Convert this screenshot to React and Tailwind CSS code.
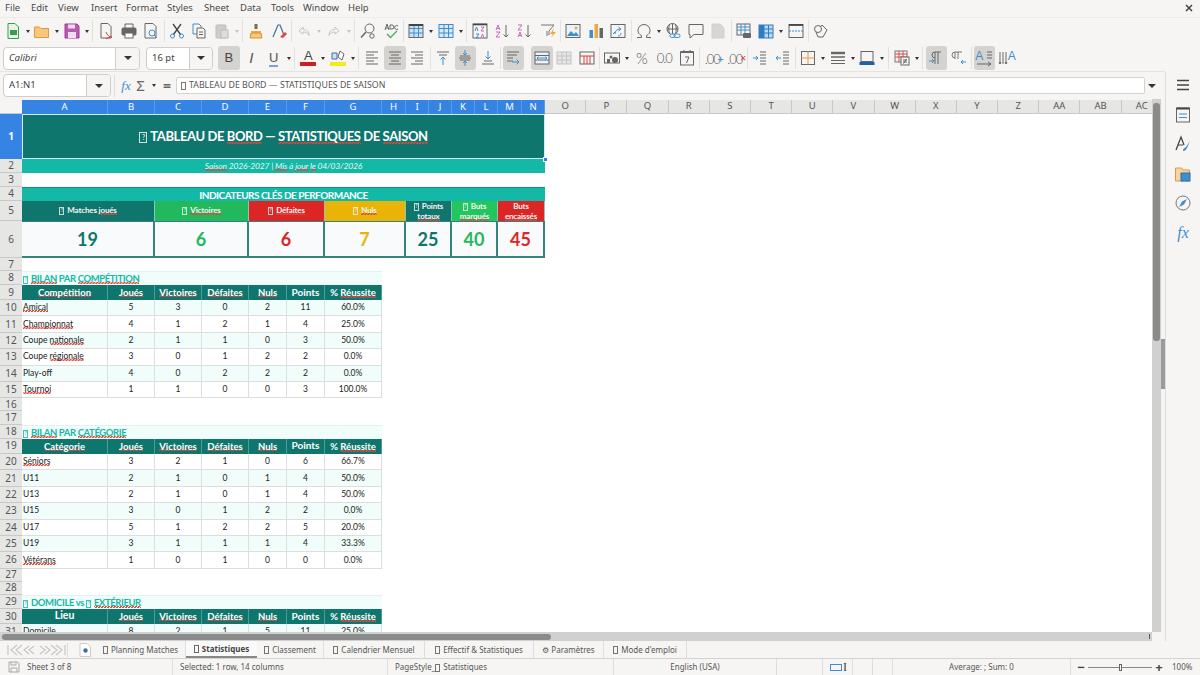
import React from "react";

const ui = "font-['Noto_Sans',sans-serif]";
const sheet = "font-['Lato',sans-serif]";
const colGrid = "grid shrink-0 grid-cols-[86px_47px_47px_47px_38px_38px_57px_24px_23px_23px_23px_23px_24px_23px]";

const menus = [
  ["File", "w-[26px]"], ["Edit", "w-[27px]"], ["View", "w-[33px]"], ["Insert", "w-[35px]"], ["Format", "w-[41px]"],
  ["Styles", "w-[37px]"], ["Sheet", "w-[36px]"], ["Data", "w-[31px]"], ["Tools", "w-[32px]"], ["Window", "w-[45px]"], ["Help", "w-[30px]"],
];

function Tofu({ q, className = "" }) {
  return (
    <span className={"inline-flex items-center justify-center border border-current align-middle mr-[3px] leading-none text-[5px] w-[5px] h-[8px] opacity-80 " + className}>
      {q ? "?" : ""}
    </span>
  );
}

// spell-check squiggle, drawn as a repeating background on the word
function W({ children }) {
  return <span className="bg-[linear-gradient(135deg,transparent_30%,#e0483c_30%,#e0483c_70%,transparent_70%)] bg-[length:3px_2px] bg-repeat-x bg-bottom">{children}</span>;
}

function Ico({ children }) {
  return (
    <svg viewBox="0 0 18 18" width="18" height="18" fill="none" strokeWidth="1" stroke="#666">
      {children}
    </svg>
  );
}

function Tool({ on, children }) {
  return (
    <div className={"w-[21.500px] h-[24px] shrink-0 flex items-center justify-center rounded-[3px] " + (on ? "bg-[#d5d3d0]" : "")}>
      {children}
    </div>
  );
}

function Drop({ light }) {
  return (
    <div className="w-[6px] shrink-0 flex items-center justify-center">
      <div className={"border-x-[2.500px] border-t-[3px] border-x-transparent " + (light ? "border-t-[#c4c4c4]" : "border-t-[#333]")} />
    </div>
  );
}

function Sep({ wide }) {
  return (
    <div className={"shrink-0 flex justify-center " + (wide ? "w-[4px]" : "w-[2px]")}>
      <div className="w-px h-[22px] bg-[#e2e1df]" />
    </div>
  );
}

function Lines({ rows, stroke = "#666" }) {
  return rows.map(([x1, x2], i) => <path key={i} d={`M${x1} ${3 + i * 3}H${x2}`} stroke={stroke} />);
}

const row1 = [
  <Ico><path d="M4 1.500h7l3.500 3.500v11.500H4z" stroke="#3a9b4a" fill="#e6f4e8" /><rect x="6" y="8" width="7" height="5" fill="#3a9b4a" stroke="none" /></Ico>, "d",
  <Ico><path d="M1.500 5h5l1.500 1.500h7.500v9h-14z" fill="#f6c77c" stroke="#e09a3a" /></Ico>, "d",
  <Ico><path d="M2 2h12l2 2v12H2z" fill="#b85bb0" stroke="#9b3f94" /><rect x="5" y="2.500" width="7" height="4" fill="#f3dcf1" stroke="none" /><rect x="5" y="10" width="8" height="6" fill="#f3dcf1" stroke="none" /></Ico>, "d", "s",
  <Ico><path d="M4 1.500h7l3 3v11.500H4z" /><path d="M9 10c1 3 3 5 6 5-2 0-5 1-6 2" stroke="#d9403a" /></Ico>,
  <Ico><path d="M5 6V2h8v4" /><rect x="2" y="6" width="14" height="7" rx="1" fill="#666" /><rect x="5" y="11" width="8" height="5" fill="#fff" /></Ico>,
  <Ico><path d="M3 1.500h8l3 3v11.500H3z" /><circle cx="10" cy="11" r="3" stroke="#3d8fcf" /><path d="M12 13l3 3" stroke="#3d8fcf" /></Ico>, "s",
  <Ico><circle cx="4.500" cy="14" r="2" stroke="#3d8fcf" /><circle cx="13.500" cy="14" r="2" stroke="#3d8fcf" /><path d="M5.500 12.500L13 2M12.500 12.500L5 2" stroke="#444" strokeWidth="1.300" /></Ico>,
  <Ico><path d="M3 2h6l2 2v8H3z" stroke="#3d8fcf" /><path d="M7 6h6l2 2v8H7z" fill="#f6f5f4" /><path d="M9 10h4M9 12.500h4" /></Ico>,
  <Ico><rect x="3" y="3" width="10" height="13" rx="1" fill="#ccc" stroke="#bbb" /><rect x="8" y="8" width="7" height="8" fill="#ddd" stroke="#bbb" /></Ico>, "dl", "s",
  <Ico><path d="M7.500 2h3v5h-3z" fill="#7a6a58" stroke="none" /><path d="M4 9h10v2H4z" fill="#f0a93c" stroke="none" /><path d="M4 11h10l1 5H3z" fill="#f6c77c" stroke="#d99432" /></Ico>,
  <Ico><path d="M3 15L8 3h2l4 10" stroke="#3d6d9c" strokeWidth="1.200" /><path d="M10 15l5-5 2 2-4 4z" fill="#e04848" stroke="none" /></Ico>, "s",
  <Ico><path d="M4 9l4-4v2.500c4 0 6 2 6 6-1.500-3-3-3.500-6-3.500V12z" stroke="#c4c4c4" /></Ico>, "dl",
  <Ico><path d="M14 9l-4-4v2.500c-4 0-6 2-6 6 1.500-3 3-3.500 6-3.500V12z" stroke="#c4c4c4" /></Ico>, "dl", "s",
  <Ico><circle cx="10.500" cy="6.500" r="4.500" /><path d="M7 10l-5 5.500" strokeWidth="1.500" /><circle cx="13" cy="14" r="2.200" /></Ico>,
  <Ico><path d="M3 8l2-6 2 6M4 6h2M8 3h2a1.200 1.200 0 010 4H8zM16 4a2 2 0 100 3" stroke="#666" /><path d="M5 12l3.500 3.500L15 9" stroke="#4cb05c" strokeWidth="1.400" /></Ico>, "s",
  <Ico><rect x="2" y="2.500" width="14" height="13" fill="#cfe2f3" stroke="#666" /><path d="M2 6.500h14M2 11h14M7 2.500v13M11.500 2.500v13" stroke="#3d8fcf" /><path d="M2 3h14" stroke="#444" strokeWidth="2" /></Ico>, "d",
  <Ico><rect x="2" y="2.500" width="14" height="13" fill="#dbe9f5" stroke="#3d8fcf" /><path d="M2 6.500h14M2 11h14M7 2.500v13M11.500 2.500v13" stroke="#3d8fcf" /></Ico>, "d", "s",
  <Ico><rect x="2" y="2" width="14" height="14" stroke="#666" /><path d="M2 2.500h14" strokeWidth="1.600" stroke="#444" /><path d="M4 9l1.500-4L7 9M5 12h3l-3 4h3" stroke="#3d8fcf" /><path d="M10 5h3l-3 4h3M10 16l1.500-4 1.500 4" stroke="#c46ac0" /></Ico>,
  <Ico><path d="M2 8l2-5 2 5M3 6.500h2M2 10h4l-4 5h4" stroke="#c46ac0" /><path d="M12 3v12M9.500 12.500L12 15l2.500-2.500" /></Ico>,
  <Ico><path d="M2 3h4L2 8h4M2 15l2-5 2 5M3 13.500h2" stroke="#c46ac0" /><path d="M12 3v12M9.500 12.500L12 15l2.500-2.500" /></Ico>,
  <Ico><path d="M2 3h13L10 9v4" stroke="#777" /><path d="M8 9v5" stroke="#777" /><path d="M15 6l-4 6h3l-2 4 5-6h-3z" fill="#f0a93c" stroke="none" /></Ico>, "s",
  <Ico><rect x="2" y="2.500" width="14" height="13" stroke="#666" fill="#eaf3fb" /><path d="M3 14l4-5 3 3 2-2 3 4z" fill="#3d8fcf" stroke="none" /><circle cx="12" cy="6" r="1.500" fill="#f0a93c" stroke="none" /></Ico>,
  <Ico><rect x="2.500" y="8" width="3.500" height="8" fill="#3d8fcf" stroke="none" /><rect x="7.500" y="2" width="3.500" height="14" fill="#f0a93c" stroke="none" /><rect x="12.500" y="6" width="3.500" height="10" fill="#666" stroke="none" /></Ico>,
  <Ico><rect x="2" y="2.500" width="14" height="13" /><path d="M6 12c0-3 2-5 5-5M9.500 5L12 7 9.500 9M6 10l-2 2M12 11c0 2-1 3-3 3" stroke="#3d8fcf" /></Ico>, "s",
  <Ico><path d="M2 15.500h4.500v-2C4 12.500 3 10.500 3 8.500a6 6 0 0112 0c0 2-1 4-3.500 5v2H16" /></Ico>, "d",
  <Ico><circle cx="8.500" cy="7" r="5.500" /><path d="M3 7h11M8.500 1.500v11M5.500 2.500c-1 3-1 6 0 9M11.500 2.500c1 3 1 6 0 9" /><rect x="6" y="12" width="5" height="3.500" rx="1.700" stroke="#3d8fcf" fill="#f6f5f4" /><rect x="10" y="12" width="6" height="3.500" rx="1.700" stroke="#3d8fcf" /></Ico>,
  <Ico><path d="M2 2.500h14v10H7l-4 3.500v-3.500H2z" /></Ico>,
  <Ico><path d="M3 2h8l4 4v10H3z" fill="#d6d6d6" stroke="#d0d0d0" /></Ico>, "s",
  <Ico><rect x="2" y="2" width="13" height="11" /><path d="M2 5h13M2 8h13M6 2v11M10 2v11" stroke="#3d8fcf" /><rect x="8" y="11" width="8" height="5" rx="1" fill="#666" stroke="none" /></Ico>,
  <Ico><rect x="2" y="3" width="14" height="13" fill="#bcd8ef" stroke="#2f7cbf" /><path d="M2 7h14M2 11h14M7 3v13M11.500 3v13" stroke="#2f7cbf" /><path d="M2 3h5v13H2z" fill="#2f7cbf" stroke="none" /></Ico>, "d",
  <Ico><rect x="2" y="2.500" width="14" height="13" /><path d="M2 3h14" strokeWidth="1.800" stroke="#444" /><path d="M2 9h14" stroke="#3d8fcf" strokeDasharray="2 1" /></Ico>, "s",
  <Ico><path d="M4 10l6-7 5 5-4 7H6z" /><circle cx="6" cy="7" r="3.500" fill="#f6f5f4" /></Ico>,
];

const al = (rows) => <Ico><Lines rows={rows} /></Ico>;

const row2a = [
  <span className="font-['Liberation_Sans',sans-serif] italic text-[#555] text-[15px]">I</span>,
  <span className="font-['Liberation_Sans',sans-serif] text-[#555] text-[13px] leading-[15px] border-b-2 border-[#7aa6d6]">U</span>,
  "d", "s",
  <div className="flex flex-col items-center"><span className="font-['Liberation_Sans',sans-serif] text-[#444] text-[13px] leading-[12px]">A</span><div className="w-[16px] h-[4px] bg-[#c9211e]" /></div>, "d",
  <div className="flex flex-col items-center"><svg viewBox="0 0 16 12" width="16" height="12"><path d="M2 3h5v6H2z" stroke="#3d6d9c" fill="#cfe2f3" /><path d="M8 7l2-6 4 3-2 6z" fill="#fff" stroke="#666" /></svg><div className="w-[16px] h-[4px] bg-[#f5ea20]" /></div>, "d", "s",
  al([[3, 15], [3, 11], [3, 15], [3, 11], [3, 15]]),
  "on:", al([[3, 15], [5, 13], [3, 15], [5, 13], [3, 15]]),
  al([[3, 15], [7, 15], [3, 15], [7, 15], [3, 15]]), "s",
  <Ico><path d="M3 3h12M5 6h8" /><path d="M9 16V8M6.500 10.500L9 8l2.500 2.500" stroke="#3d8fcf" /></Ico>,
  "on:", <Ico><path d="M3 9h12" /><path d="M4 7h10M4 11h10" /><path d="M9 1v5M7 4L9 6l2-2M9 17v-5M7 14l2-2 2 2" stroke="#3d8fcf" /></Ico>,
  <Ico><path d="M3 15h12M5 12h8" /><path d="M9 2v8M6.500 7.500L9 10l2.500-2.500" stroke="#3d8fcf" /></Ico>, "s",
  "on:", <Ico><path d="M3 3h12M3 6h10M3 9h6M3 12h6" /><path d="M8 13h7M12.500 10.500L15 13l-2.500 2.500" stroke="#3d8fcf" /></Ico>,
];

const row2b = [
  "on:", <Ico><rect x="2" y="3" width="14" height="12" fill="#eaf3fb" /><path d="M2 6.500h14M2 11h14" /><path d="M4 9h10M5.500 7.500L4 9l1.500 1.500M12.500 7.500L14 9l-1.500 1.500" stroke="#3d8fcf" /></Ico>,
  <Ico><rect x="2" y="3" width="14" height="12" stroke="#c4c4c4" fill="#e6e6e6" /><path d="M2 7h14M2 11h14M7 3v12M11.500 3v12" stroke="#c4c4c4" /></Ico>,
  <Ico><rect x="2" y="3" width="14" height="12" stroke="#666" /><path d="M2 7h14" stroke="#d9403a" /><path d="M6 7v8M9 7v8M12 7v8" stroke="#d9403a" /></Ico>, "s",
  <Ico><rect x="1.500" y="4" width="15" height="10" /><rect x="4" y="10" width="3" height="4" fill="#666" stroke="none" /><circle cx="12" cy="11" r="3" fill="#666" stroke="none" /><circle cx="8" cy="8" r="1.500" fill="#666" stroke="none" /></Ico>, "d",
  <span className={sheet + " text-[15px] font-light leading-none text-[#555]"}>%</span>,
  <span className={sheet + " text-[13px] font-light tracking-[-1px] leading-none text-[#555]"}>0.0</span>,
  <Ico><rect x="2.500" y="3" width="13" height="13" /><path d="M2.500 3h13" strokeWidth="2" /><path d="M6 1v3M12 1v3M7 8h4l-2.500 6" /></Ico>, "s",
  <div className="relative"><span className={sheet + " text-[13px] font-light tracking-[-1px] leading-none text-[#555]"}>.00</span><span className="absolute -right-[4px] top-[7px] text-[11px] leading-none text-[#3d8fcf]">+</span></div>,
  <div className="relative"><span className={sheet + " text-[13px] font-light tracking-[-1px] leading-none text-[#555]"}>.00</span><span className="absolute -right-[4px] top-[6px] text-[11px] leading-none text-[#d9403a]">×</span></div>, "s",
  <Ico><path d="M9 3h6M9 6h6M9 9h6M9 12h6M9 15h6" /><path d="M2 9h5M5 7l2 2-2 2" stroke="#3d8fcf" /></Ico>,
  <Ico><path d="M9 3h6M9 6h6M9 9h6M9 12h6M9 15h6" /><path d="M2 9h5M4 7L2 9l2 2" stroke="#3d8fcf" /></Ico>, "s",
  <Ico><rect x="2.500" y="2.500" width="13" height="13" /><path d="M9 2.500v13M2.500 9h13" stroke="#e09a3a" /></Ico>, "d",
  <Ico><path d="M2 4h14" strokeWidth="2.400" /><path d="M2 8h14" strokeWidth="1.500" /><path d="M2 11.500h14M2 14.500h14" /></Ico>, "d",
  <Ico><rect x="3" y="2.500" width="12" height="10" /><rect x="1.500" y="13" width="15" height="3" fill="#1f5fa3" stroke="none" /></Ico>, "d", "s",
  <Ico><rect x="2" y="2" width="12" height="11" stroke="#777" /><path d="M2 5h12M2 8h12M6 2v11M10 2v11" stroke="#e04848" /><rect x="8" y="8" width="8" height="8" fill="#f6f5f4" /><path d="M10 11h4M10 13h4M13.500 10l-3 4.500" /></Ico>, "d", "s",
  "on:", <Ico><path d="M8 15V3h6M11 15V3M8 3a3 3 0 000 6" /><path d="M2 12h5M5 10l2 2-2 2" stroke="#3d8fcf" /></Ico>,
  <Ico><path d="M5 10V3h7M8 10V3M5 3a3 3 0 000 6" stroke="#777" /><path d="M11 13h5M13 11l-2 2 2 2" stroke="#3d8fcf" /></Ico>, "s",
  "on:", <div className="relative w-[18px] h-[18px]"><span className="absolute left-0 top-[1px] font-['Liberation_Sans',sans-serif] text-[12px] leading-none text-[#3d8fcf]">A</span><svg viewBox="0 0 18 18" width="18" height="18" className="absolute inset-0"><path d="M2 15h14M13 13l3 2-3 2M12 3h5M12 6h5M12 9h5" stroke="#666" fill="none" /></svg></div>,
  <div className="relative w-[18px] h-[18px]"><span className="absolute right-0 top-[1px] font-['Liberation_Sans',sans-serif] text-[12px] leading-none text-[#3d8fcf]">A</span><svg viewBox="0 0 18 18" width="18" height="18" className="absolute inset-0"><path d="M2 3v12M5 3v12M8 3v12M1 13l1 2 1-2M7 13l1 2 1-2" stroke="#666" fill="none" /></svg></div>,
];

function ToolRow({ items }) {
  const out = [];
  let on = false;
  items.forEach((it, i) => {
    const prev = items[i - 1];
    if (it === "on:") on = true;
    else if (it === "d") out.push(<Drop key={i} />);
    else if (it === "dl") out.push(<Drop key={i} light />);
    else if (it === "s") out.push(<Sep key={i} wide={prev === "d" || prev === "dl"} />);
    else {
      out.push(<Tool key={i} on={on}>{it}</Tool>);
      on = false;
    }
  });
  return out;
}

function Combo({ box, split, italic, children }) {
  return (
    <div className={"h-[23px] flex border border-[#cfcdca] rounded-[4px] bg-white shrink-0 overflow-hidden " + box}>
      <div className={"flex-1 flex items-center pl-[5px] text-[9.500px] text-[#444] " + (italic ? "italic" : "")}>{children}</div>
      <div className={"flex items-center justify-center bg-[#f6f5f4] border-l border-[#cfcdca] " + split}>
        <div className="border-x-[4px] border-t-[4px] border-x-transparent border-t-[#333]" />
      </div>
    </div>
  );
}

function Toolbars() {
  return (
    <>
      <div className="h-[17px] flex items-center pl-[5px] text-[9.500px] text-[#4a4a4a] relative">
        {menus.map(([m, w]) => <div key={m} className={w}>{m}</div>)}
        <svg viewBox="0 0 8 8" width="8" height="8" className="absolute right-[7px] top-[4px]"><path d="M1 1l6 6M7 1L1 7" stroke="#444" strokeWidth="1.500" /></svg>
      </div>
      <div className="h-[27px] flex items-center gap-px pl-[2px] border-t border-[#ecebe9]">
        <ToolRow items={row1} />
      </div>
      <div className="h-[28px] flex items-center pl-[3px]">
        <Combo box="w-[137px]" split="w-[24px]" italic>Calibri</Combo>
        <div className="w-[6px]" />
        <Combo box="w-[67px]" split="w-[23px]">16 pt</Combo>
        <div className="w-[5px]" />
        <Tool on><span className="font-['Liberation_Sans',sans-serif] text-[13px] text-[#444]">B</span></Tool>
        <div className="flex items-center gap-px ml-px">
          <ToolRow items={row2a} />
          <div className="w-[5px]" />
          <ToolRow items={row2b} />
        </div>
      </div>
    </>
  );
}

function FormulaBar() {
  return (
    <div className="h-[28px] flex items-center pl-[3px] pr-[6px] border-t border-[#e4e3e1] mt-[-1px]">
      <Combo box="w-[108px]" split="w-[24px]">A1:N1</Combo>
      <div className="w-[7px] flex justify-center"><div className="w-px h-[22px] bg-[#dedddb]" /></div>
      <span className="w-[14px] ml-[1px] font-['Liberation_Serif',serif] italic text-[13px] text-[#3d8fcf] text-center">fx</span>
      <span className="w-[15px] text-[15px] text-[#666] text-center">Σ</span>
      <div className="w-[12px] flex justify-center"><div className="border-x-[2.500px] border-t-[3px] border-x-transparent border-t-[#333]" /></div>
      <span className="w-[14px] text-[14px] font-bold text-[#666] text-center">=</span>
      <div className="w-[2px]" />
      <div className="flex-1 h-[17px] bg-white border border-[#d5d3d0] rounded-[2px] flex items-center pl-[4px] text-[8.800px] text-[#555]">
        <span><Tofu />TABLEAU DE BORD — STATISTIQUES DE SAISON</span>
      </div>
      <div className="w-[14px] flex justify-center"><div className="border-x-[4px] border-t-[4px] border-x-transparent border-t-[#333]" /></div>
    </div>
  );
}

function ColHeaders() {
  const blue = ["A", "B", "C", "D", "E", "F", "G", "H", "I", "J", "K", "L", "M", "N"];
  const rest = ["O", "P", "Q", "R", "S", "T", "U", "V", "W", "X", "Y", "Z", "AA", "AB", "AC"];
  return (
    <div className="h-[14px] flex text-[9.500px] shrink-0 mt-px overflow-hidden">
      <div className="w-[22px] shrink-0 bg-[#f6f5f4] border-b border-[#c8c8c8]" />
      <div className={colGrid + " bg-[#3584e4] text-white"}>
        {blue.map((c) => <div key={c} className="flex items-center justify-center border-r border-[#5a9ae8]">{c}</div>)}
      </div>
      {rest.map((c) => (
        <div key={c} className="w-[41.200px] shrink-0 flex items-center justify-center bg-[#e6e6e5] text-[#555] border-r border-b border-[#c8c8c8]">{c}</div>
      ))}
    </div>
  );
}

function Row({ n, h, sel, children }) {
  return (
    <div className={"flex shrink-0 " + h}>
      <div className={"w-[22px] shrink-0 flex items-center justify-center text-[10px] border-b " + (sel ? "bg-[#3584e4] text-white font-bold border-[#3584e4]" : "bg-[#e6e6e5] text-[#555] border-[#c8c8c8]")}>{n}</div>
      <div className={colGrid + " " + sheet}>{children}</div>
    </div>
  );
}

function TableHead({ first, firstBig }) {
  const cells = [<W>Joués</W>, <W>Victoires</W>, <W>Défaites</W>, <W>Nuls</W>, "Points", <span>% <W>Réussite</W></span>];
  const hc = "bg-[#0f766e] text-white font-bold flex items-center justify-center border-r border-[#4d9c95] leading-none";
  return (
    <>
      <div className={hc + (firstBig ? " text-[10.500px] pb-[2px]" : " text-[9.500px]")}>{first}</div>
      {cells.map((c, i) => <div key={i} className={hc + (i === 4 ? " text-[10px] pb-[2px]" : " text-[9.500px]")}>{c}</div>)}
    </>
  );
}

function DataRow({ n, h, cells, odd }) {
  const bg = odd ? "bg-[#f0fdfa]" : "bg-white";
  const c = "flex items-center border-r border-b border-[#dcdfde] text-[#222] text-[8.500px] " + bg;
  return (
    <Row n={n} h={h}>
      <div className={c + " pl-px"}><span>{cells[0]}</span></div>
      {cells.slice(1).map((v, i) => <div key={i} className={c + " justify-center"}>{v}</div>)}
    </Row>
  );
}

function Section({ n, children }) {
  return (
    <Row n={n} h="h-[14px]">
      <div className="col-span-7 bg-[#f0fdfa] text-[#14b8a6] font-bold text-[9.500px] tracking-[-0.400px] flex items-center pl-px pb-px border-t border-[#dff3ef]">
        <span className="whitespace-nowrap">{children}</span>
      </div>
    </Row>
  );
}

const compet = [
  [<W>Amical</W>, 5, 3, 0, 2, 11, "60.0%"],
  [<W>Championnat</W>, 4, 1, 2, 1, 4, "25.0%"],
  [<>Coupe <W>nationale</W></>, 2, 1, 1, 0, 3, "50.0%"],
  [<>Coupe <W>régionale</W></>, 3, 0, 1, 2, 2, "0.0%"],
  ["Play-off", 4, 0, 2, 2, 2, "0.0%"],
  [<W>Tournoi</W>, 1, 1, 0, 0, 3, "100.0%"],
];

const categ = [
  [<W>Séniors</W>, 3, 2, 1, 0, 6, "66.7%"],
  ["U11", 2, 1, 0, 1, 4, "50.0%"],
  ["U13", 2, 1, 0, 1, 4, "50.0%"],
  ["U15", 3, 0, 1, 2, 2, "0.0%"],
  ["U17", 5, 1, 2, 2, 5, "20.0%"],
  ["U19", 3, 1, 1, 1, 4, "33.3%"],
  [<W>Vétérans</W>, 1, 0, 1, 0, 0, "0.0%"],
];

function Kpi({ span, bg, big, children }) {
  return (
    <div className={span + " " + bg + " text-[#f4f4f4] font-bold flex items-center justify-center text-center border-r border-[#8fc4be] text-[8px] tracking-[-0.150px] " + (big ? "leading-[10px]" : "pb-[2px]")}>
      <div>{children}</div>
    </div>
  );
}

function KVal({ span, color, children }) {
  return (
    <div className={span + " bg-[#f8fafc] border-r-2 border-b-2 border-t border-[#35837c] flex items-center justify-center font-bold text-[18px] " + color}>{children}</div>
  );
}

function Sheet() {
  return (
    <div className="flex-1 min-h-0 overflow-hidden bg-white relative">
      <Row n="1" h="h-[45px]" sel>
        <div className="col-span-14 bg-[#0f766e] border border-[#d5e8f7] text-white font-bold text-[13px] tracking-[-0.400px] flex items-center justify-center">
          <span><Tofu q className="w-[8px] h-[11px] text-[7px]" />TABLEAU DE <W>BORD</W> — <W>STATISTIQUES</W> DE <W>SAISON</W></span>
        </div>
      </Row>
      <Row n="2" h="h-[14px]">
        <div className="col-span-14 bg-[#14b8a6] text-[#e6f7f4] italic text-[8.500px] tracking-[-0.150px] flex items-center justify-center">
          <span><W>Saison</W> 2026-2027 | <W>Mis</W> à <W>jour</W> <W>le</W> 04/03/2026</span>
        </div>
      </Row>
      <Row n="3" h="h-[14px]" />
      <Row n="4" h="h-[14px]">
        <div className="col-span-14 bg-[#14b8a6] text-white font-bold text-[10px] tracking-[-0.500px] flex items-center justify-center border-t border-[#0f8f82] pb-[3px]">INDICATEURS CLÉS DE PERFORMANCE</div>
      </Row>
      <Row n="5" h="h-[20px]">
        <Kpi span="col-span-2" bg="bg-[#0f766e]"><Tofu q />Matches <W>joués</W></Kpi>
        <Kpi span="col-span-2" bg="bg-[#22b85c]"><Tofu q /><W>Victoires</W></Kpi>
        <Kpi span="col-span-2" bg="bg-[#dc2626]"><Tofu q /><W>Défaites</W></Kpi>
        <Kpi span="col-span-2" bg="bg-[#eab308]"><Tofu q /><W>Nuls</W></Kpi>
        <Kpi span="col-span-2" bg="bg-[#0f766e]" big><Tofu q />Points<br /><W>totaux</W></Kpi>
        <Kpi span="col-span-2" bg="bg-[#22c55e]" big><Tofu q />Buts<br /><W>marqués</W></Kpi>
        <Kpi span="col-span-2" bg="bg-[#dc2626]" big>Buts<br /><W>encaissés</W></Kpi>
      </Row>
      <Row n="6" h="h-[37px]">
        <KVal span="col-span-2" color="text-[#0f766e]">19</KVal>
        <KVal span="col-span-2" color="text-[#22b85c]">6</KVal>
        <KVal span="col-span-2" color="text-[#dc2626]">6</KVal>
        <KVal span="col-span-2" color="text-[#eab308]">7</KVal>
        <KVal span="col-span-2" color="text-[#0f766e]">25</KVal>
        <KVal span="col-span-2" color="text-[#22b85c]">40</KVal>
        <KVal span="col-span-2" color="text-[#dc2626]">45</KVal>
      </Row>
      <Row n="7" h="h-[13px]" />
      <Section n="8"><Tofu q /><W>BILAN</W> PAR <W>COMPÉTITION</W></Section>
      <Row n="9" h="h-[15px]"><TableHead first={<W>Compétition</W>} /></Row>
      {compet.map((c, i) => <DataRow key={i} n={10 + i} h="h-[16.400px]" cells={c} odd={i % 2 === 0} />)}
      <Row n="16" h="h-[13px]" />
      <Row n="17" h="h-[13.600px]" />
      <Section n="18"><Tofu q /><W>BILAN</W> PAR <W>CATÉGORIE</W></Section>
      <Row n="19" h="h-[15px]"><TableHead first={<W>Catégorie</W>} /></Row>
      {categ.map((c, i) => <DataRow key={i} n={20 + i} h="h-[16.400px]" cells={c} odd={i % 2 === 1} />)}
      <Row n="27" h="h-[13px]" />
      <Row n="28" h="h-[13.400px]" />
      <Section n="29"><Tofu q />DOMICILE vs <Tofu q /><W>EXTÉRIEUR</W></Section>
      <Row n="30" h="h-[15px]"><TableHead first="Lieu" firstBig /></Row>
      <DataRow n="31" h="h-[16px]" cells={["Domicile", 8, 2, 1, 5, 11, "25.0%"]} odd />
      <div className="absolute left-[543px] top-[43px] w-[5px] h-[5px] bg-[#3584e4] border border-white" />
    </div>
  );
}

function Sidebar() {
  return (
    <div className="w-[35px] shrink-0 border-l border-[#dedddb] flex flex-col items-center pt-[4px] gap-[11.500px]">
      <svg viewBox="0 0 18 18" width="18" height="18"><path d="M3 4.500h12M3 9h12M3 13.500h12" stroke="#444" strokeWidth="1.500" /></svg>
      <Ico><rect x="2.500" y="2" width="13" height="14" /><path d="M2.500 2.500h13" strokeWidth="2" stroke="#444" /><path d="M5 8h8M5 11.500h8" stroke="#3d8fcf" /></Ico>
      <Ico><path d="M2 15L7 2l3 8" stroke="#444" strokeWidth="1.300" /><path d="M4 10h5" stroke="#444" /><path d="M9 16c0-3 2-3 3-4l4-6-3 7c-1 2-2 3-4 3z" fill="#3d8fcf" stroke="none" /></Ico>
      <Ico><path d="M1.500 3h6l1.500 2h6.500v11h-14z" fill="#f6d4a4" stroke="#e09a3a" /><rect x="7" y="8" width="9" height="8" fill="#3d8fcf" stroke="#2f6fa8" /></Ico>
      <Ico><circle cx="9" cy="9" r="7" stroke="#777" /><path d="M13 5l-3 5.500L5 13l3-5.500z" fill="#3d8fcf" stroke="none" /></Ico>
      <span className="font-['Liberation_Serif',serif] italic text-[16px] leading-[18px] text-[#3d8fcf]">fx</span>
    </div>
  );
}

function TabBar() {
  const tabs = [
    ["Planning Matches", "w-[90px]"], ["Classement", "w-[67px]"], ["Calendrier Mensuel", "w-[101px]"],
    ["Effectif & Statistiques", "w-[109px]"], ["Paramètres", "w-[70px]"], ["Mode d'emploi", "w-[83px]"],
  ];
  const Tab = ([t, w], gear) => (
    <div key={t} className={"h-[17px] flex items-center justify-center border-r border-[#dedddb] shrink-0 text-[8px] text-[#555] whitespace-nowrap " + w}>
      <span>{gear ? <span className="mr-[2px]">⚙</span> : <Tofu />}{t}</span>
    </div>
  );
  return (
    <div className="h-[17px] flex items-center pl-[7px] shrink-0 bg-[#f6f5f4]">
      <svg viewBox="0 0 60 12" width="60" height="12" fill="none" stroke="#c6c6c6" strokeWidth="1.200" className="shrink-0">
        <path d="M1 1v10M10 1L4 6l6 5M15 1l-6 5 6 5M22 2l-5 4 5 4M27 2l-5 4 5 4M33 2l5 4-5 4M38 2l5 4-5 4M44 1l6 5-6 5M49 1l6 5-6 5M58 1v10" />
      </svg>
      <div className="w-px h-[14px] bg-[#dedddb] mr-[11px] shrink-0" />
      <svg viewBox="0 0 12 14" width="12" height="14" className="shrink-0"><path d="M1 .5h7l3.500 3.500v9.500H1z" fill="#fff" stroke="#ccc" /><circle cx="6.500" cy="7.500" r="2.200" fill="#3d6db5" /></svg>
      <div className="w-[5px] shrink-0" />
      {Tab(tabs[0])}
      <div className="h-[17px] w-[71px] shrink-0 bg-[#fafafa] border-b-2 border-[#888] flex items-center justify-center text-[8px] font-bold text-[#444]"><span><Tofu />Statistiques</span></div>
      {Tab(tabs[1])}
      {Tab(tabs[2])}
      {Tab(tabs[3])}
      {Tab(tabs[4], true)}
      {Tab(tabs[5])}
    </div>
  );
}

function StatusBar() {
  const c = "h-full flex items-center border-r border-[#dedddb] shrink-0";
  return (
    <div className="h-[17px] flex items-center border-t border-[#d5d3d0] text-[8px] text-[#555] shrink-0 bg-[#f6f5f4] whitespace-nowrap">
      <div className={c + " w-[173px]"}>
        <div className="w-[27px] flex justify-center">
          <svg viewBox="0 0 12 12" width="12" height="12" fill="none" stroke="#aaa"><path d="M1 1h8.500L11 2.500V11H1z" /><path d="M3 1v3h5V1M3 11V7h6v4" /></svg>
        </div>
        Sheet 3 of 8
      </div>
      <div className={c + " w-[215px] pl-[7px]"}>Selected: 1 row, 14 columns</div>
      <div className={c + " w-[226px] pl-[7px]"}><span>PageStyle_<Tofu className="mr-[2px]" />Statistiques</span></div>
      <div className={c + " w-[163px] justify-center"}>English (USA)</div>
      <div className={c + " w-[46px]"} />
      <div className={c + " w-[30px]"}>
        <div className="w-[12px] h-[7px] border border-[#3d8fcf] ml-[7px] mr-[1px]" />
        <span className="font-['Liberation_Serif',serif] text-[12px] text-[#444]">I</span>
      </div>
      <div className={c + " w-[20px]"} />
      <div className={c + " w-[20px]"} />
      <div className={c + " w-[178px] justify-center"}>Average: ; Sum: 0</div>
      <div className="flex items-center w-[93px] shrink-0 pl-[5px]">
        <span className="text-[13px] text-[#444] leading-none w-[10px] text-center font-bold">−</span>
        <div className="relative w-[65px] h-px bg-[#888] mx-[2px]">
          <div className="absolute left-[31px] -top-[3px] w-[3px] h-[7px] bg-[#f6f5f4] border border-[#666]" />
        </div>
        <span className="text-[13px] text-[#444] leading-none w-[10px] text-center font-bold">+</span>
      </div>
      <div className="pl-[8px]">100%</div>
    </div>
  );
}

export default function App() {
  return (
    <div className={ui + " w-[1200px] h-[675px] overflow-hidden flex flex-col bg-[#f6f5f4]"}>
      <Toolbars />
      <div className="flex-1 min-h-0 flex">
        <div className="w-[1165px] shrink-0 flex flex-col min-h-0">
          <FormulaBar />
          <div className="flex-1 min-h-0 flex">
            <div className="w-[1152px] shrink-0 flex flex-col min-h-0">
              <ColHeaders />
              <Sheet />
            </div>
            <div className="w-[13px] shrink-0 flex">
              <div className="w-[9px] bg-[#d0d0d0] pt-[4px] px-px">
                <div className="h-[238px] bg-[#8a8a8a] rounded-[3px]" />
              </div>
              <div className="w-[4px] relative">
                <div className="absolute left-0 top-[240px] w-[4px] h-[50px] bg-[#9a9a9a]" />
              </div>
            </div>
          </div>
          <div className="h-[9px] shrink-0 bg-[#d0d0d0] w-[1152px] flex items-center justify-between px-[2px]">
            <div className="w-[549px] h-[6px] bg-[#8a8a8a] rounded-[3px]" />
            <div className="w-px h-[5px] bg-[#555]" />
          </div>
        </div>
        <Sidebar />
      </div>
      <TabBar />
      <StatusBar />
    </div>
  );
}
